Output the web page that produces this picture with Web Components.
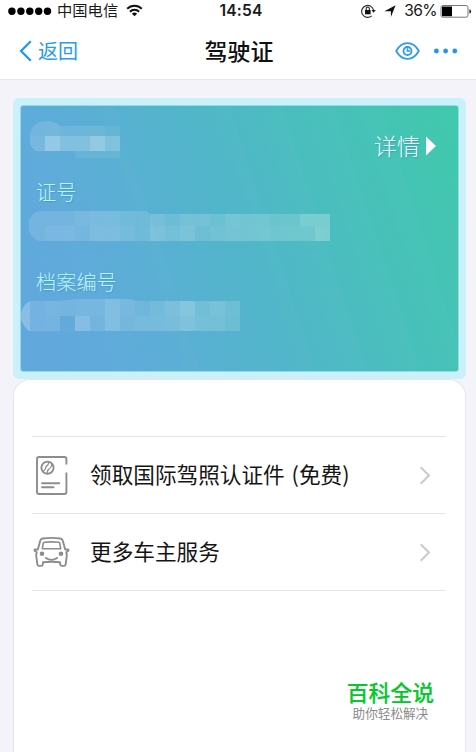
<!DOCTYPE html>
<html lang="zh-CN">
<head>
<meta charset="UTF-8">
<meta name="viewport" content="width=device-width, initial-scale=1">
<title>驾驶证</title>
<style>
    html, body {
        margin: 0;
        height: 100%;
        overflow: hidden;
        background: #f3f3f9;
        font-family: "Noto Sans CJK SC", sans-serif;
    }
</style>
</head>
<body>
<license-app></license-app>

<script>
// Status bar: signal, carrier, clock, battery
class StatusBar extends HTMLElement {
    constructor() {
        super();
        this.attachShadow({ mode: 'open' });
    }

    connectedCallback() {
        const carrier = this.getAttribute('carrier') || '';
        const time = this.getAttribute('time') || '';
        const battery = this.getAttribute('battery') || '0';

        this.shadowRoot.innerHTML = `
            <style>
                :host {
                    display: grid;
                    grid-template-columns: 1fr auto 1fr;
                    align-items: center;
                    height: 20px;
                    padding: 0 4px 0 8px;
                    background: #fff;
                    color: #1a1a1a;
                    line-height: 20px;
                    white-space: nowrap;
                }
                svg { display: block; flex: none; }
                .left, .right { display: flex; align-items: center; }
                .right { justify-content: flex-end; }
                .carrier { font-size: 15.3px; line-height: 18px; margin: 0 8px 3px 5px; }
                .time { font: 600 15.6px/20px Inter, sans-serif; letter-spacing: 0.2px; padding: 1px 0 0 2px; }
                .percent { font: 400 15.6px/20px Inter, sans-serif; letter-spacing: -0.6px; margin: 1px 3px 0 8px; }
                .arrow { margin-left: 8px; }
            </style>
            <div class="left">
                <svg width="44" height="20" fill="#000">
                    <circle cx="3.9" cy="10.2" r="3.7"/><circle cx="12.9" cy="10.2" r="3.7"/>
                    <circle cx="21.8" cy="10.2" r="3.7"/><circle cx="30.7" cy="10.2" r="3.7"/>
                    <circle cx="39.5" cy="10.2" r="3.7"/>
                </svg>
                <span class="carrier">${carrier}</span>
                <svg width="17" height="20" fill="none" stroke="#111" stroke-width="2">
                    <path d="M1.2 7.8a10.2 10.2 0 0 1 14.6 0M3.9 10.7a6.4 6.4 0 0 1 9.2 0"/>
                    <path d="M8.5 15.3 5.9 12.7a3.7 3.7 0 0 1 5.2 0Z" fill="#111" stroke="none"/>
                </svg>
            </div>
            <span class="time">${time}</span>
            <div class="right">
                <svg width="15" height="20" fill="none" stroke="#333" stroke-width="1.2">
                    <path d="M10.7 14.9A6 6 0 1 1 12.6 9.4"/>
                    <path d="M10.4 9h4.4l-2.2 2.8Z" fill="#222" stroke="none"/>
                    <rect x="4" y="9" width="5.6" height="4.3" fill="#111" stroke="none"/>
                    <path d="M5.2 9V7.8a1.6 1.6 0 0 1 3.2 0V9"/>
                </svg>
                <svg class="arrow" width="12" height="20" fill="#111"><path d="M11.6 4.2 6.9 16V10.3H.4Z"/></svg>
                <span class="percent">${battery}%</span>
                <svg width="32" height="20">
                    <rect x="1" y="4.5" width="27" height="11.7" rx="2" fill="none" stroke="#777"/>
                    <rect x="2" y="5.5" width="10" height="9.7" fill="#000"/>
                    <path d="M29.4 8.2q1.7.4 1.7 2.2t-1.7 2.2Z" fill="#222"/>
                </svg>
            </div>
        `;
    }
}

class NavBar extends HTMLElement {
    constructor() {
        super();
        this.attachShadow({ mode: 'open' });
    }

    connectedCallback() {
        const back = this.getAttribute('back') || '';

        this.shadowRoot.innerHTML = `
            <style>
                :host {
                    display: grid;
                    grid-template-columns: 1fr auto 1fr;
                    align-items: center;
                    height: 60px;
                    padding: 0 18px;
                    box-sizing: border-box;
                    background: #fff;
                    border-bottom: 1px solid #e8e8ea;
                    white-space: nowrap;
                }
                svg { display: block; }
                .back { display: flex; align-items: center; gap: 5px; color: #2b9bec; font-size: 20px; line-height: 28px; padding-top: 2px; }
                .title { font-size: 23px; font-weight: 500; line-height: 30px; color: #111; padding: 0 0 0 2px; }
                .actions { display: flex; justify-content: flex-end; align-items: center; gap: 13px; padding-top: 2px; }
            </style>
            <div class="back">
                <svg width="15" height="22" fill="none" stroke="#1f96ee" stroke-width="2.2"><path d="M12.8 1.2 3 11l9.8 9.8"/></svg>
                <span>${back}</span>
            </div>
            <div class="title"><slot></slot></div>
            <div class="actions">
                <svg width="25" height="20" fill="none" stroke="#2b9bec" stroke-width="1.8">
                    <path d="M1.2 10C4 5 8 2.2 12.5 2.2S21 5 23.8 10C21 15 17 17.8 12.5 17.8S4 15 1.2 10Z"/>
                    <circle cx="12.5" cy="10" r="4"/>
                    <path d="M12.5 7.2V10h2.6" stroke-width="1.6"/>
                </svg>
                <svg width="25" height="20" fill="#1f96ee">
                    <circle cx="3.4" cy="10" r="2.4"/><circle cx="12.6" cy="10" r="2.4"/><circle cx="21.8" cy="10" r="2.4"/>
                </svg>
            </div>
        `;
    }
}

// Each cell is x, y, width, height, white opacity; the outline clips them all
const MASKS = {
    name: {
        w: 92, h: 39,
        clip: 'M1 14C3 5 9 1 17 1Q25 1 32 6H91V38H16V32H9Q3 29 1 24Z',
        cells: [
            [1, 0, 15, 16, .13], [16, 0, 15, 16, .14], [31, 0, 45, 16, .11], [76, 0, 15, 16, .07],
            [1, 16, 15, 15, .16], [16, 16, 15, 15, .34], [31, 16, 30, 15, .23], [61, 16, 15, 15, .34], [76, 16, 15, 15, .23],
            [46, 31, 45, 7, .08]
        ]
    },
    number: {
        w: 302, h: 32,
        clip: 'M1 10Q5 1 15 1H118L122 4H302V31H11Q3 28 1 21Z',
        cells: [
            [1, 0, 16, 31, .13], [17, 0, 30, 16, .13], [47, 0, 15, 16, .16], [62, 0, 30, 16, .18], [92, 0, 15, 16, .14], [107, 0, 15, 16, .13],
            [17, 16, 30, 15, .17], [47, 16, 15, 15, .14], [62, 16, 30, 15, .2], [92, 16, 15, 15, .17], [107, 16, 15, 15, .13],
            [122, 0, 15, 16, .18], [137, 0, 15, 16, .14], [152, 0, 30, 16, .19], [182, 0, 15, 16, .15], [197, 0, 15, 16, .21], [212, 0, 30, 16, .19], [242, 0, 30, 16, .16], [272, 0, 30, 16, .25],
            [122, 16, 15, 15, .22], [137, 16, 15, 15, .18], [152, 16, 15, 15, .22], [167, 16, 15, 15, .15], [182, 16, 15, 15, .18], [197, 16, 45, 15, .2], [242, 16, 45, 15, .19], [287, 16, 15, 15, .27]
        ]
    },
    file: {
        w: 220, h: 32,
        clip: 'M1 15Q3 4 11 2H40Q50 0 62 0H108L120 2H220V32H9Q3 27 1 20Z',
        cells: [
            [0, 0, 10, 32, .25], [10, 0, 15, 32, .12],
            [25, 0, 15, 17, .15], [40, 0, 15, 17, .13], [55, 0, 30, 17, .15], [85, 0, 15, 17, .22], [100, 0, 15, 17, .16], [115, 0, 15, 17, .12], [130, 0, 15, 17, .15], [145, 0, 15, 17, .2], [160, 0, 15, 17, .27], [175, 0, 15, 17, .16], [190, 0, 15, 17, .2], [205, 0, 15, 17, .15],
            [25, 17, 15, 15, .13], [40, 17, 15, 15, .02], [55, 17, 15, 15, .24], [70, 17, 15, 15, .12], [85, 17, 15, 15, .22], [100, 17, 15, 15, .14], [115, 17, 30, 15, .17], [145, 17, 15, 15, .18], [160, 17, 15, 15, .23], [175, 17, 30, 15, .18], [205, 17, 15, 15, .14]
        ]
    }
};

// Pixelated strip that covers a private value
class MaskedValue extends HTMLElement {
    constructor() {
        super();
        this.attachShadow({ mode: 'open' });
    }

    connectedCallback() {
        const mask = MASKS[this.getAttribute('type')];
        if (!mask) return;

        this.shadowRoot.innerHTML = `
            <style>
                :host { display: block; }
                svg { display: block; }
            </style>
            <svg width="${mask.w}" height="${mask.h}" shape-rendering="crispEdges">
                <clipPath id="outline"><path d="${mask.clip}"/></clipPath>
                <g clip-path="url(#outline)" fill="#fff">
                    ${mask.cells.map(([x, y, w, h, o]) => `<rect x="${x}" y="${y}" width="${w}" height="${h}" fill-opacity="${o}"/>`).join('')}
                </g>
            </svg>
        `;
    }
}

class LicenseCard extends HTMLElement {
    constructor() {
        super();
        this.attachShadow({ mode: 'open' });
    }

    connectedCallback() {
        this.shadowRoot.innerHTML = `
            <style>
                :host {
                    display: block;
                    box-sizing: border-box;
                    height: 281px;
                    padding: 7px;
                    border-radius: 6px;
                    background: #caf1fa;
                }
                .face {
                    box-sizing: border-box;
                    height: 267px;
                    padding: 14px 0 0 7px;
                    border: 1px solid #91dce5;
                    border-radius: 3px;
                    background:
                        linear-gradient(72deg, transparent 30%, rgba(255,255,255,.014) 34%, transparent 34.5%, transparent 52%, rgba(255,255,255,.015) 56%, transparent 56.5%, rgba(255,255,255,.015) 66%, transparent 66.5%, rgba(255,255,255,.015) 76%, transparent 76.5%, rgba(255,255,255,.015) 85%, transparent 85.5%),
                        linear-gradient(68deg, #62a7de 0%, #5fabda 20%, #52b5cb 48%, #49bebd 70%, #40c9ac 100%);
                }
                .top { display: flex; justify-content: space-between; height: 57px; }
                .top masked-value { margin-left: 1px; }
                .detail {
                    display: flex;
                    align-items: center;
                    gap: 6px;
                    height: 34px;
                    margin: 9px 22px 0 0;
                    color: #effcff;
                    font-size: 23px;
                    font-weight: 300;
                    text-shadow: 1px 1px 1px rgba(45, 140, 175, .6);
                }
                .detail span { margin-bottom: 2px; }
                .detail svg { display: block; }
                .label {
                    height: 30px;
                    padding-left: 8px;
                    font-size: 20.2px;
                    font-weight: 300;
                    line-height: 30px;
                    color: #c3f3fa;
                    text-shadow: 1px 1px 1px rgba(40, 155, 185, .6);
                }
                .number { margin-top: 3px; height: 57px; }
                .file { margin: 2px 0 0 -8px; }
            </style>
            <div class="face">
                <div class="top">
                    <masked-value type="name"></masked-value>
                    <div class="detail">
                        <span>详情</span>
                        <svg width="10" height="20"><path d="M0 .5 10 10 0 19.5Z" fill="#fff"/></svg>
                    </div>
                </div>
                <div class="label">证号</div>
                <masked-value class="number" type="number"></masked-value>
                <div class="label">档案编号</div>
                <masked-value class="file" type="file"></masked-value>
            </div>
        `;
    }
}

class ServiceRow extends HTMLElement {
    constructor() {
        super();
        this.attachShadow({ mode: 'open' });
    }

    connectedCallback() {
        this.shadowRoot.innerHTML = `
            <style>
                :host {
                    display: flex;
                    align-items: center;
                    box-sizing: border-box;
                    height: 77px;
                    border-bottom: 1px solid #e6e6e8;
                    color: #151515;
                    font-size: 21.65px;
                    line-height: 32px;
                    white-space: nowrap;
                }
                .icon { width: 58px; height: 40px; flex: none; }
                .label { flex: 1; margin-bottom: 2px; word-spacing: 2px; }
                .chevron { display: block; margin-right: 15px; }
            </style>
            <div class="icon"><slot name="icon"></slot></div>
            <div class="label"><slot></slot></div>
            <svg class="chevron" width="12" height="20" fill="none" stroke="#c9c9ce" stroke-width="2"><path d="M1.7 2.2 10 10.5l-8.3 8.3"/></svg>
        `;
    }
}

class ServicePanel extends HTMLElement {
    constructor() {
        super();
        this.attachShadow({ mode: 'open' });
    }

    connectedCallback() {
        this.shadowRoot.innerHTML = `
            <style>
                :host {
                    display: block;
                    box-sizing: border-box;
                    padding: 56px 19px 0 18px;
                    border: 1px solid #e5e5ec;
                    border-bottom: 0;
                    border-radius: 17px 17px 0 0;
                    background: #fff;
                }
                .list { border-top: 1px solid #e6e6e8; }
            </style>
            <div class="list"><slot></slot></div>
        `;
    }
}

class BrandMark extends HTMLElement {
    constructor() {
        super();
        this.attachShadow({ mode: 'open' });
    }

    connectedCallback() {
        this.shadowRoot.innerHTML = `
            <style>
                :host {
                    position: absolute;
                    right: 42px;
                    bottom: 30px;
                    text-align: center;
                    white-space: nowrap;
                }
                .name { font-size: 21.8px; font-weight: 500; line-height: 22px; color: #06c82c; -webkit-text-stroke: 0.2px #06c82c; }
                .slogan { font-size: 12.6px; line-height: 19px; color: #8b8b8b; }
            </style>
            <div class="name">${this.getAttribute('name')}</div>
            <div class="slogan">${this.getAttribute('slogan')}</div>
        `;
    }
}

class LicenseApp extends HTMLElement {
    constructor() {
        super();
        this.attachShadow({ mode: 'open' });
    }

    connectedCallback() {
        this.shadowRoot.innerHTML = `
            <style>
                :host {
                    position: relative;
                    display: flex;
                    flex-direction: column;
                    height: 100vh;
                    overflow: hidden;
                }
                main {
                    flex: 1;
                    display: flex;
                    flex-direction: column;
                    padding: 18px 10px 0 13px;
                }
                service-panel { flex: 1; }
                service-row svg { display: block; }
            </style>
            <status-bar carrier="中国电信" time="14:54" battery="36"></status-bar>
            <nav-bar back="返回">驾驶证</nav-bar>
            <main>
                <license-card></license-card>
                <service-panel>
                    <service-row>
                        <svg slot="icon" width="40" height="40" fill="none" stroke="#8d8d8d" stroke-width="1.9" stroke-linecap="round">
                            <path d="M34.4 9.5V4q0-2-2-2H7Q5 2 5 4v33q0 2 2 2h25.4q2 0 2-2V17.5" stroke-linecap="butt"/>
                            <circle cx="15.5" cy="12.7" r="6.1"/>
                            <path d="M10.8 16.2q2.6-.8 2.8-3.2.2-2 2-2.8 1.200-.8 1-3M15.500 18.300q-.5-3 1.500-4.300 2.500-1.500 3-5" stroke-width="1.3"/>
                            <path d="M10 28.3h17.3M10 32.3h11.5"/>
                        </svg>
                        领取国际驾照认证件 (免费)
                    </service-row>
                    <service-row>
                        <svg slot="icon" width="40" height="40" fill="none" stroke="#8d8d8d" stroke-width="1.9" stroke-linecap="round" stroke-linejoin="round">
                            <path d="M5.8 17.600 8.300 8.600Q8.800 6.800 10.600 6.500q8.900-1.200 17.800 0 1.800.3 2.300 2.100l2.500 9 2.700-.2q1.200.5.2 1.600l-1.900 1.200q.8 1.600.5 4l-1 8q-.2 1.700-1.700 1.700h-2.200q-1.500 0-1.600-1.700l-.2-1.900q-8.500-1.200-17 0l-.2 1.900q-.1 1.700-1.600 1.700H7q-1.500 0-1.700-1.700l-1-8q-.3-2.400.5-4L2.900 19q-1-1.100.2-1.600Z"/>
                            <path d="M12.3 10.3q7.200-.9 14.400 0 .9.200 1.100 1.100l.9 5.400H10.300l.9-5.400q.2-.9 1.100-1.100Z" stroke-width="1.6"/>
                            <path d="M13.8 26q5.7 3.700 11.400 0"/>
                            <circle cx="10" cy="21.7" r="2.3" fill="#8d8d8d" stroke="none"/>
                            <circle cx="29" cy="21.7" r="2.3" fill="#8d8d8d" stroke="none"/>
                        </svg>
                        更多车主服务
                    </service-row>
                </service-panel>
            </main>
            <brand-mark name="百科全说" slogan="助你轻松解决"></brand-mark>
        `;
    }
}

customElements.define('status-bar', StatusBar);
customElements.define('nav-bar', NavBar);
customElements.define('masked-value', MaskedValue);
customElements.define('license-card', LicenseCard);
customElements.define('service-row', ServiceRow);
customElements.define('service-panel', ServicePanel);
customElements.define('brand-mark', BrandMark);
customElements.define('license-app', LicenseApp);
</script>
</body>
</html>
